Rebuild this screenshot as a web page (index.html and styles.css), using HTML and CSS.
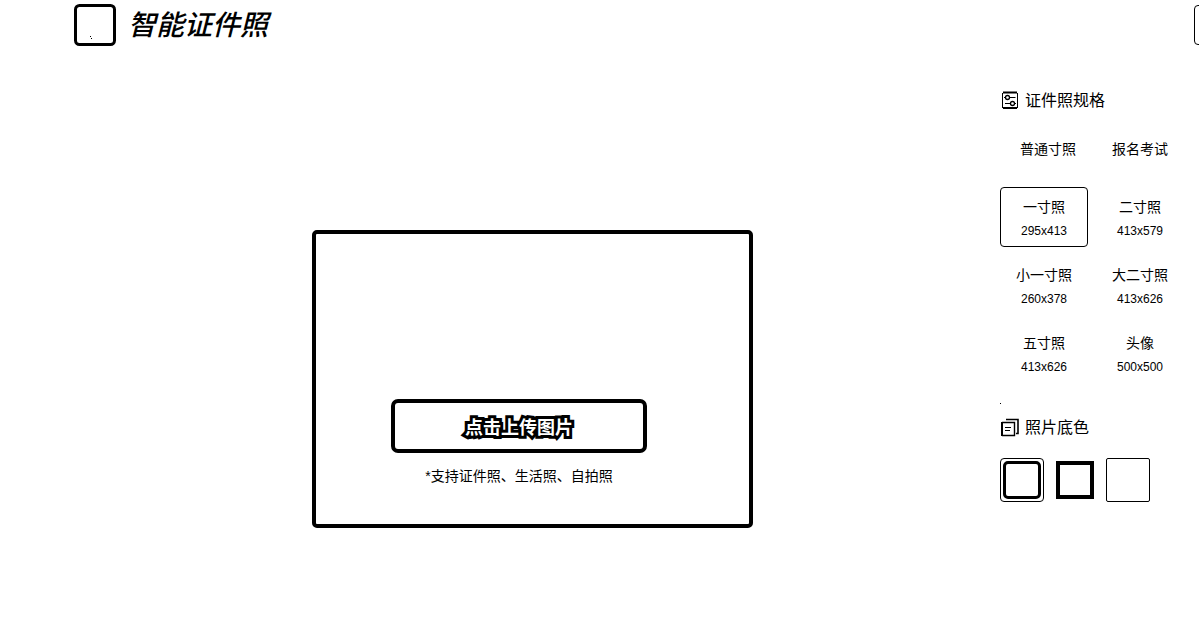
FILE: index.html
```html
<!DOCTYPE html>
<html lang="zh-CN">
<head>
<meta charset="utf-8">
<meta name="viewport" content="width=device-width, initial-scale=1">
<title>智能证件照</title>
<link rel="stylesheet" href="styles.css">
</head>
<body>
<header class="header">
  <svg class="logo" viewBox="0 0 42 42" aria-hidden="true">
    <rect x="1.5" y="1.5" width="39" height="39" rx="4" fill="none" stroke="#000" stroke-width="3"/>
    <path d="M16 32h1v1h-1zM17 34h1v1h-1z"/>
  </svg>
  <h1 class="brand">智能证件照</h1>
  <button class="header-action" type="button" aria-label="菜单"></button>
</header>
<div class="layout">
  <main class="workspace">
    <section class="upload">
      <button class="upload-button" type="button">点击上传图片</button>
      <p class="upload-note">*支持证件照、生活照、自拍照</p>
    </section>
  </main>
  <aside class="sidebar">
    <h2 class="section-title">
      <svg class="icon" viewBox="0 0 20 20" fill="none" stroke="#000" aria-hidden="true">
        <path d="M2.5 2v15M17.5 2v15"/>
        <path d="M3 1.5h14M3 17h14" stroke-width="2"/>
        <circle cx="7.5" cy="6.5" r="2" stroke-width="1.3"/>
        <path d="M4 6.5h1.5M9.5 6.5h6M5 12.5h5M14 12.5h2"/>
        <circle cx="12.5" cy="12.5" r="2" stroke-width="1.3"/>
      </svg>
      <span>证件照规格</span>
    </h2>
    <div class="tabs">
      <button class="tab" type="button">普通寸照</button>
      <button class="tab" type="button">报名考试</button>
    </div>
    <div class="sizes">
      <button class="size size-active" type="button"><span>一寸照</span><span class="pixels">295x413</span></button>
      <button class="size" type="button"><span>二寸照</span><span class="pixels">413x579</span></button>
      <button class="size" type="button"><span>小一寸照</span><span class="pixels">260x378</span></button>
      <button class="size" type="button"><span>大二寸照</span><span class="pixels">413x626</span></button>
      <button class="size" type="button"><span>五寸照</span><span class="pixels">413x626</span></button>
      <button class="size" type="button"><span>头像</span><span class="pixels">500x500</span></button>
    </div>
    <div class="divider"></div>
    <h2 class="section-title">
      <svg class="icon" viewBox="0 0 20 20" fill="none" stroke="#000" aria-hidden="true">
        <path d="M6 1.5h12V15.5H16" stroke-width="1.6"/>
        <path d="M2 4v14" stroke-width="2"/>
        <path d="M2 4.5h12.5v13H2" stroke-width="1.4"/>
        <path d="M5 9.5h6M5 12.5h5"/>
      </svg>
      <span>照片底色</span>
    </h2>
    <div class="swatches">
      <button class="swatch swatch-active" type="button" aria-label="底色一"><span class="chip chip-round"></span></button>
      <button class="swatch" type="button" aria-label="底色二"><span class="chip"></span></button>
      <button class="swatch swatch-plain" type="button" aria-label="底色三"></button>
    </div>
  </aside>
</div>
</body>
</html>
```
FILE: styles.css
```css
* { box-sizing: border-box; }

body {
  margin: 0;
  background: #fff;
  color: #000;
  font-family: "Liberation Sans", "Noto Sans CJK SC", sans-serif;
  font-size: 14px;
}

button {
  margin: 0;
  padding: 0;
  border: 0;
  background: none;
  color: inherit;
  font: inherit;
}

h1, h2, p { margin: 0; }

.header {
  display: flex;
  align-items: center;
  height: 50px;
  padding-left: 74px;
  overflow: hidden;
}

.logo {
  flex: none;
  width: 42px;
  height: 42px;
}

.brand {
  margin-left: 12px;
  padding-top: 2px;
  font-size: 28px;
  font-style: italic;
  font-weight: 500;
  line-height: 40px;
}

.header-action {
  flex: none;
  width: 40px;
  height: 40px;
  margin-left: auto;
  margin-right: -35px;
  border: 1px solid #000;
  border-radius: 4px;
}

.layout { display: flex; }

.workspace {
  display: flex;
  flex: 1;
  justify-content: center;
  align-items: flex-start;
  padding: 180px 0 90px 65px;
}

.upload {
  display: flex;
  flex-direction: column;
  align-items: center;
  width: 441px;
  padding: 165px 27px 38px 0;
  border: 4px solid #000;
  border-radius: 5px;
}

.upload-button {
  width: 256px;
  height: 54px;
  border: 4px solid #000;
  border-radius: 7px;
  color: #fff;
  font-size: 18px;
  font-weight: 700;
  -webkit-text-stroke: 6px #000;
  paint-order: stroke fill;
}

.upload-note {
  margin-top: 13px;
  line-height: 20px;
}

.sidebar {
  flex: none;
  width: 199px;
  padding: 39px 15px 0 0;
}

.section-title {
  display: flex;
  align-items: center;
  gap: 5px;
  font-size: 16px;
  font-weight: 400;
  line-height: 24px;
}

.icon {
  width: 20px;
  height: 20px;
}

.tabs {
  display: flex;
  margin-top: 19px;
}

.tab {
  flex: 88;
  height: 32px;
}

.tab:first-child { flex: 96; }

.sizes {
  display: grid;
  grid-template-columns: 1fr 1fr;
  gap: 8px;
  margin-top: 23px;
}

.size {
  display: flex;
  flex-direction: column;
  align-items: center;
  justify-content: center;
  gap: 4px;
  height: 60px;
  padding-top: 3px;
  line-height: 20px;
}

.size-active {
  border: 1px solid #000;
  border-radius: 4px;
}

.pixels { font-size: 12px; }

.divider {
  width: 1px;
  height: 1px;
  margin: 20px 0 12px;
  background: #000;
}

.swatches {
  display: flex;
  gap: 9px;
  margin-top: 18px;
}

.swatch {
  display: flex;
  align-items: center;
  justify-content: center;
  width: 44px;
  height: 44px;
}

.swatch-active {
  border: 1px solid #000;
  border-radius: 4px;
}

.swatch-plain {
  border: 1px solid #000;
  border-radius: 2px;
}

.chip {
  width: 38px;
  height: 38px;
  border: 4px solid #000;
}

.chip-round {
  border-width: 3px;
  border-radius: 5px;
}
```
